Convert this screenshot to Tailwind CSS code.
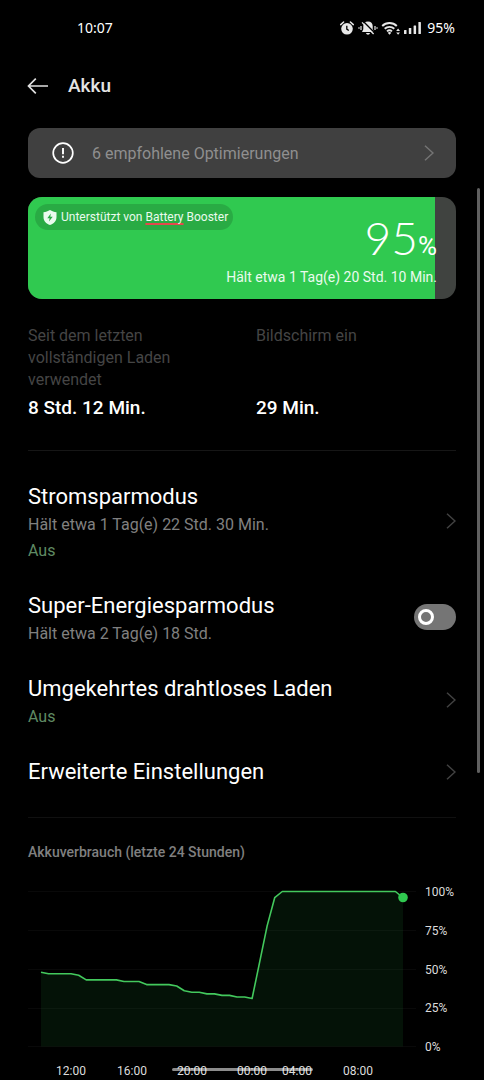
<!DOCTYPE html>
<html lang="de">
<head>
    <meta charset="utf-8">
    <meta name="viewport" content="width=device-width, initial-scale=1">
    <title>Akku</title>
    <script src="https://cdn.jsdelivr.net/npm/@tailwindcss/browser@4"></script>
</head>
<body class="bg-black text-white font-['Roboto',sans-serif] overflow-x-hidden">

<!-- status bar -->
<div class="flex h-14 items-center justify-between pl-[77px] pr-[29px] font-['Noto_Sans',sans-serif] text-sm">
    <span>10:07</span>
    <div class="flex items-center gap-[3px]">
        <svg class="h-4 w-4" viewBox="0 0 16 16" fill="none" stroke="#e8e8e8">
            <circle cx="8" cy="8.800" r="5.800" fill="#e8e8e8" stroke="none"/>
            <path d="M1.700 4.600 4.600 2M14.300 4.600 11.400 2" stroke-width="1.500" stroke-linecap="round"/>
            <path d="M7.800 5.800v3.300l2 1.500" stroke="#000" stroke-width="1.300"/>
        </svg>
        <svg class="h-4 w-5" viewBox="0 0 20 16" fill="none" stroke="#e8e8e8">
            <path d="M10 1.500c-3 0-4.700 2-4.700 4.600v3.200L4 12h12l-1.300-2.700V6.100c0-2.600-1.700-4.600-4.700-4.600z" fill="#e8e8e8" stroke="none"/>
            <path d="M8 13h4c-.3 1.200-1 1.700-2 1.700S8.300 14.200 8 13z" fill="#e8e8e8" stroke="none"/>
            <path d="M5.400 1.600 16.800 13" stroke="#000" stroke-width="1.400"/>
            <path d="M4 2.400 15.600 14" stroke-width="1.300"/>
            <path d="M3 6v4M17 6v4M1 7.200v1.600M19 7.200v1.600" stroke-width="1.200"/>
        </svg>
        <svg class="h-4 w-5" viewBox="0 0 20 16" fill="none" stroke="#e8e8e8">
            <path d="M1.200 6a10.500 10.500 0 0 1 14.600 0M3.700 8.800a7 7 0 0 1 9.600 0M6 11.400a3.800 3.800 0 0 1 5 0" stroke-width="1.900"/>
            <path d="m8.500 14.800-1.800-2a2.700 2.700 0 0 1 3.600 0z" fill="#e8e8e8" stroke="none"/>
            <path d="m15.200 10.900 1.900-2.300 1.900 2.300zM15.200 12.400l1.900 2.300 1.900-2.300z" fill="#e8e8e8" stroke="none"/>
        </svg>
        <svg class="h-4 w-[18px]" viewBox="0 0 18 16" fill="#e8e8e8">
            <rect x="0" y="10" width="2.500" height="4" rx=".5"/>
            <rect x="4.800" y="8" width="2.500" height="6" rx=".5"/>
            <rect x="9.600" y="5.500" width="2.500" height="8.500" rx=".5"/>
            <rect x="14.400" y="2" width="2.500" height="12" rx=".5"/>
        </svg>
        <span class="ml-0.5">95%</span>
    </div>
</div>

<header class="flex h-[60px] items-center gap-5 px-[27px]">
    <a href="#" aria-label="Zurück">
        <svg class="h-5 w-[21px]" viewBox="0 0 21 20" fill="none" stroke="#e0e0e0" stroke-width="1.700">
            <path d="M21 10H1.500M8.800 2.700 1.500 10l7.300 7.300"/>
        </svg>
    </a>
    <h1 class="text-[19px] font-medium text-[#e4e4e4]">Akku</h1>
</header>

<main class="px-7 pt-3">
    <a href="#" class="flex h-[50px] items-center rounded-xl bg-[#404040] pl-6 pr-[22px] text-[#8f8f8f]">
        <svg class="h-[22px] w-[22px]" viewBox="0 0 22 22" fill="none" stroke="#fff">
            <circle cx="11" cy="11" r="9.800" stroke-width="1.700"/>
            <path d="M11 6v6.200M11 13.800v2" stroke-width="1.900"/>
        </svg>
        <span class="ml-[18px] flex-1 pt-px text-base">6 empfohlene Optimierungen</span>
        <svg class="h-4 w-[10px]" viewBox="0 0 10 16" fill="none" stroke="#747474" stroke-width="1.500"><path d="m1 .8 8 7.200-8 7.200"/></svg>
    </a>

    <!-- charge level -->
    <section class="relative mt-[19px] h-[102px] overflow-hidden rounded-[14px] bg-[#404340]">
        <div class="h-full bg-[#30c950]" style="width: 95%"></div>
        <div class="absolute inset-0 flex flex-col items-end pr-[19px]">
            <p class="mt-[7px] ml-[7px] flex h-[26px] items-center gap-1 self-start rounded-full bg-[#29ab44] pl-2 pr-[5px] text-xs text-[#eafbee]">
                <svg class="h-[15px] w-[14px]" viewBox="0 0 14 15">
                    <path d="M7 0c2 1.300 4.200 2 6.500 2.200V7c0 4-2.600 6.600-6.500 8C3.100 13.600.5 11 .5 7V2.200C2.800 2 5 1.300 7 0z" fill="#eafbee"/>
                    <path d="M7.800 3.500 4.300 8.200h2.300L6 11.500l3.700-4.800H7.300z" fill="#29ab44"/>
                </svg>
                <span>Unterstützt von <span class="underline decoration-[#e5484d] decoration-2 underline-offset-2 [text-decoration-skip-ink:none]">Battery</span> Booster</span>
            </p>
            <p class="-mt-[11px] flex items-baseline leading-[38px]">
                <span class="font-['Lato',sans-serif] text-[46px] font-light">95</span>
                <span class="text-[26px] leading-none">%</span>
            </p>
            <p class="mt-2 text-sm text-[#eafbee]">Hält etwa 1 Tag(e) 20 Std. 10 Min.</p>
        </div>
    </section>

    <dl class="mt-[26px] grid grid-cols-2 gap-7 border-b border-[#161616] pb-[30px]">
        <div class="flex flex-col justify-between gap-[5px]">
            <dt class="text-base leading-[22px] text-[#454545]">Seit dem letzten vollständigen Laden verwendet</dt>
            <dd class="text-[19px] leading-6 font-medium">8 Std. 12 Min.</dd>
        </div>
        <div class="flex flex-col justify-between gap-[5px]">
            <dt class="text-base leading-[22px] text-[#454545]">Bildschirm ein</dt>
            <dd class="text-[19px] leading-6 font-medium">29 Min.</dd>
        </div>
    </dl>

    <!-- settings -->
    <ul class="flex flex-col gap-[29px] border-b border-[#101010] pt-8 pb-[31px]">
        <li>
            <a href="#" class="flex items-center justify-between">
                <div class="flex flex-col gap-0.5">
                    <h2 class="text-[22px] leading-7">Stromsparmodus</h2>
                    <p class="text-base leading-6 text-[#808080]">Hält etwa 1 Tag(e) 22 Std. 30 Min.</p>
                    <p class="text-base leading-6 text-[#5f8a63]">Aus</p>
                </div>
                <svg class="mb-1 h-4 w-[10px]" viewBox="0 0 10 16" fill="none" stroke="#424242" stroke-width="1.500"><path d="m1 .8 8 7.200-8 7.200"/></svg>
            </a>
        </li>
        <li class="flex items-center justify-between">
            <label for="super-mode" class="flex flex-col gap-0.5">
                <span class="text-[22px] leading-7">Super-Energiesparmodus</span>
                <span class="text-base leading-6 text-[#808080]">Hält etwa 2 Tag(e) 18 Std.</span>
            </label>
            <input id="super-mode" type="checkbox" role="switch"
                   class="mb-1 flex h-[26px] w-[42px] appearance-none items-center rounded-full bg-[#757575] px-1 before:h-4 before:w-4 before:rounded-full before:border-[3px] before:border-white before:content-[''] checked:justify-end checked:bg-[#30c950]">
        </li>
        <li>
            <a href="#" class="flex items-center justify-between">
                <div class="flex flex-col gap-0.5">
                    <h2 class="text-[22px] leading-7">Umgekehrtes drahtloses Laden</h2>
                    <p class="text-base leading-6 text-[#5f8a63]">Aus</p>
                </div>
                <svg class="mb-1 h-4 w-[10px]" viewBox="0 0 10 16" fill="none" stroke="#424242" stroke-width="1.500"><path d="m1 .8 8 7.200-8 7.200"/></svg>
            </a>
        </li>
        <li>
            <a href="#" class="flex items-center justify-between">
                <h2 class="text-[22px] leading-7">Erweiterte Einstellungen</h2>
                <svg class="h-4 w-[10px]" viewBox="0 0 10 16" fill="none" stroke="#424242" stroke-width="1.500"><path d="m1 .8 8 7.200-8 7.200"/></svg>
            </a>
        </li>
    </ul>

    <!-- usage chart -->
    <section class="pt-6">
        <h2 class="text-sm leading-5 font-medium text-[#808080]">Akkuverbrauch (letzte 24 Stunden)</h2>
        <svg class="mt-[18px] block w-full" viewBox="0 0 428 199">
            <path d="M0 11.500h388M0 50.500h388M0 89.500h388M0 128.500h388M0 166.500h388" stroke="#090909"/>
            <path d="M13 92.200 20.500 93.700H43L50.700 95.300 58.200 99.900H88.400L96 101.500H111L118.600 104.600H141L148.700 106 156.300 110.800 163.800 112.300H171.300L178.900 113.900H186.400L194 115.400H201.500L209 117H216.600L224.100 118.500 239.200 45.600 246.700 17.700 254.300 11.500H367.400L375 17.700V166.500H13z" fill="#30c950" fill-opacity=".09"/>
            <path d="M13 92.200 20.500 93.700H43L50.700 95.300 58.200 99.900H88.400L96 101.500H111L118.600 104.600H141L148.700 106 156.300 110.800 163.800 112.300H171.300L178.900 113.900H186.400L194 115.400H201.500L209 117H216.600L224.100 118.500 239.200 45.600 246.700 17.700 254.300 11.500H367.400L375 17.700" fill="none" stroke="#43c95d" stroke-width="1.600" stroke-linejoin="round"/>
            <circle cx="375" cy="17.500" r="4.800" fill="#30c950"/>
            <g class="text-xs" fill="#dcdcdc">
                <text x="397" y="16">100%</text>
                <text x="397" y="55">75%</text>
                <text x="397" y="94">50%</text>
                <text x="397" y="132">25%</text>
                <text x="397" y="171">0%</text>
            </g>
            <g class="text-xs" fill="#dcdcdc" text-anchor="middle">
                <text x="43" y="195">12:00</text>
                <text x="104" y="195">16:00</text>
                <text x="164" y="195">20:00</text>
                <text x="224" y="195">00:00</text>
                <text x="269" y="195">04:00</text>
                <text x="330" y="195">08:00</text>
            </g>
        </svg>
    </section>
</main>

<!-- scroll position and home gesture bar -->
<div class="fixed top-[188px] right-1 h-[585px] w-[3px] rounded-full bg-[#606060]"></div>
<div class="fixed inset-x-0 bottom-[9px] mx-auto h-[3px] w-[141px] rounded-full bg-white/55"></div>
</body>
</html>
